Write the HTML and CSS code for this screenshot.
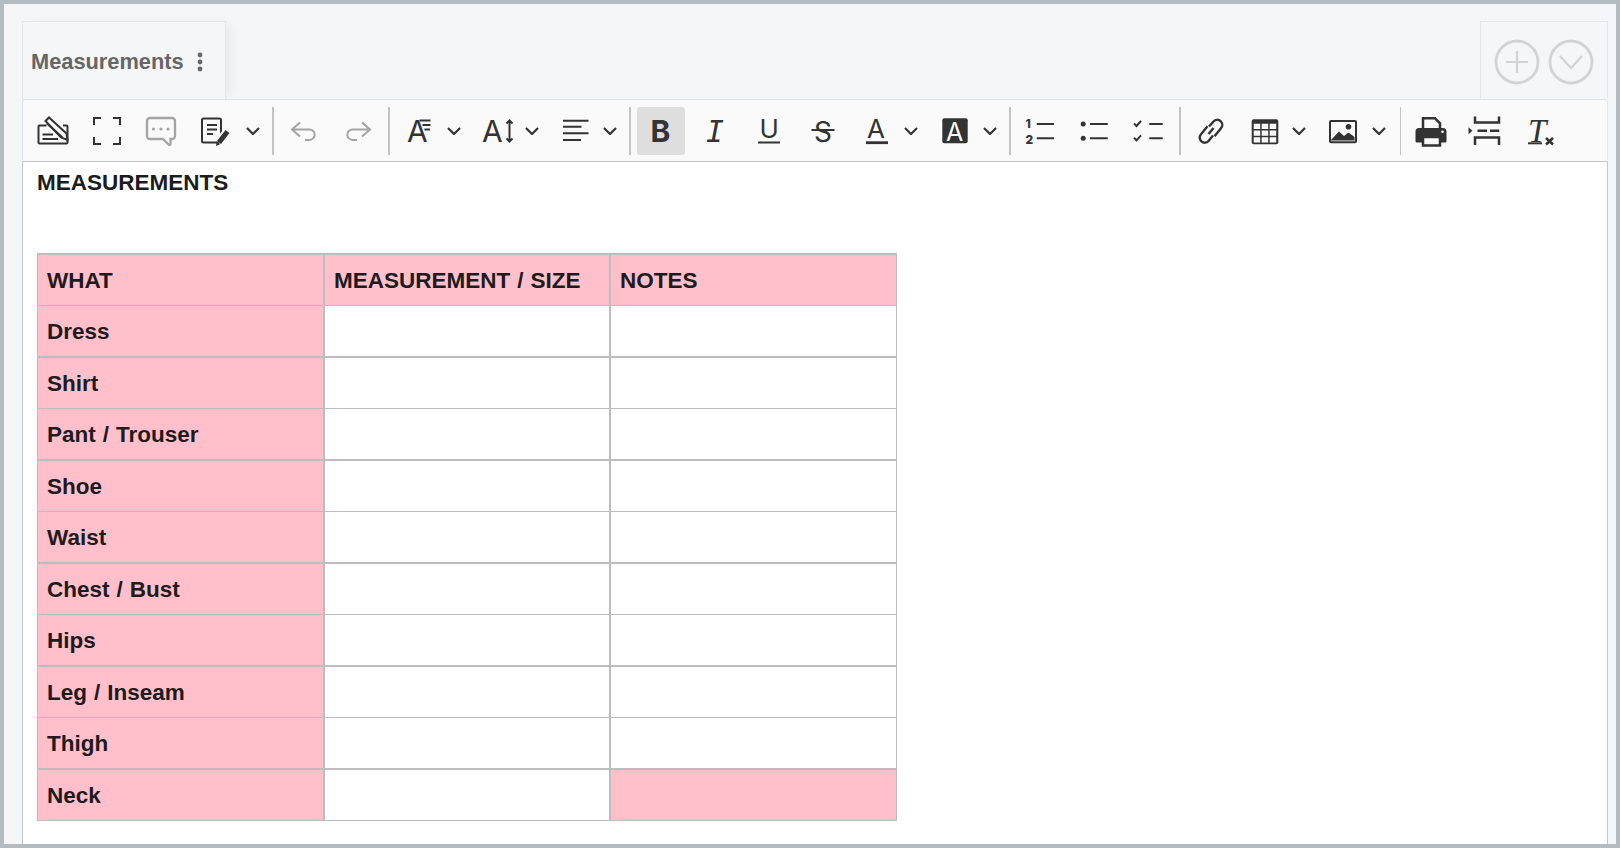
FILE: index.html
```html
<!DOCTYPE html>
<html lang="en">
<head>
<meta charset="utf-8">
<title>Measurements</title>
<link rel="stylesheet" href="styles.css">
</head>
<body>
<div class="frame">
  <div class="tabs">
    <div class="tab">
      <span class="tab-title">Measurements</span>
      <svg class="kebab" width="8" height="22" viewBox="0 0 8 22"><circle cx="4" cy="4" r="2.400"/><circle cx="4" cy="11" r="2.400"/><circle cx="4" cy="18" r="2.400"/></svg>
    </div>
    <div class="tab-actions">
      <svg class="round" width="46" height="46" viewBox="0 0 46 46"><circle cx="23" cy="23" r="21"/><path d="M12 23h22M23 12v22"/></svg>
      <svg class="round" width="46" height="46" viewBox="0 0 46 46"><circle cx="23" cy="23" r="21"/><path d="M12 17l11 12 11-12"/></svg>
    </div>
  </div>
  <div class="editor">
    <div class="toolbar">
      <button class="btn"><svg class="ic" viewBox="0 0 32 32"><path d="M9.500 10.500H2.500a1 1 0 0 0-1 1v16a1 1 0 0 0 1 1h27a1 1 0 0 0 1-1v-16a1 1 0 0 0-1-1H26"/><path d="M5.500 19.500H16M5.500 24H21"/><path class="bgfill" d="M8.500 6l3.500-3.500 17.500 16 1 6.500-6.500-2.500z"/><path d="M10 8.500l15.500 14"/></svg></button>
      <button class="btn"><svg class="ic" viewBox="0 0 32 32"><path d="M10 3H3v7M22 3h7v7M3 22v7h7M29 22v7h-7"/></svg></button>
      <button class="btn off"><svg class="ic heavy" viewBox="0 0 32 32"><path d="M5 3h22a3 3 0 0 1 3 3v15a3 3 0 0 1-3 3h-1.500v5a1 1 0 0 1-1.700.700L18 24H5a3 3 0 0 1-3-3V6a3 3 0 0 1 3-3z"/><circle class="dot" cx="8.500" cy="14" r="1.600"/><circle class="dot" cx="16" cy="14" r="1.600"/><circle class="dot" cx="23" cy="14" r="1.600"/></svg></button>
      <div class="drop wide">
        <button class="btn"><svg class="ic" viewBox="0 0 32 32"><rect x="3" y="3.500" width="19" height="24" rx="1.500"/><path d="M8 10h10M8 14.500h10M8 19h6"/><path class="halo" d="M28.500 16.500l-8.500 11"/><path class="thick" d="M28.500 16.500l-8.500 11"/><path class="dot" d="M17 31l.5-4.500 3.500 2.700z"/></svg></button>
        <svg class="chev" width="14" height="8" viewBox="0 0 14 8"><path d="M1 1l6 6 6-6"/></svg>
      </div>
      <span class="sep s1"></span>

      <button class="btn off"><svg class="ic" viewBox="0 0 32 32"><path d="M12 7.500l-8 7 8 7M4 14.500h17.500a5.200 5.200 0 0 1 0 10.400H17"/></svg></button>
      <button class="btn off"><svg class="ic" viewBox="0 0 32 32"><path d="M20 7.500l8 7-8 7M28 14.500H10.500a5.200 5.200 0 0 0 0 10.400H15"/></svg></button>
      <span class="sep"></span>

      <div class="drop">
        <button class="btn"><svg class="ic" viewBox="0 0 32 32"><text class="t-a" x="3" y="27">A</text><path d="M15.500 5.500h11M18.500 10H26.500M20.500 14.500h5.500"/></svg></button>
        <svg class="chev" width="14" height="8" viewBox="0 0 14 8"><path d="M1 1l6 6 6-6"/></svg>
      </div>
      <div class="drop">
        <button class="btn"><svg class="ic" viewBox="0 0 32 32"><text class="t-a" x="0" y="27">A</text><path d="M27.500 6v20M24.500 8.500l3-3 3 3M24.500 23.500l3 3 3-3"/></svg></button>
        <svg class="chev" width="14" height="8" viewBox="0 0 14 8"><path d="M1 1l6 6 6-6"/></svg>
      </div>
      <div class="drop">
        <button class="btn"><svg class="ic" viewBox="0 0 32 32"><path d="M3 5.700h25.500M3 11.700h18.500M3 18.300h25.500M3 25h18"/></svg></button>
        <svg class="chev" width="14" height="8" viewBox="0 0 14 8"><path d="M1 1l6 6 6-6"/></svg>
      </div>
      <span class="sep s2"></span>

      <button class="btn on"><svg class="ic" viewBox="0 0 32 32"><text class="t-b" x="5.500" y="27">B</text></svg></button>
      <button class="btn"><svg class="ic" viewBox="0 0 32 32"><text class="t-i" x="7" y="27">I</text></svg></button>
      <button class="btn"><svg class="ic" viewBox="0 0 32 32"><text class="t-u" x="6.500" y="23">U</text><path d="M5 27.500h22"/></svg></button>
      <button class="btn"><svg class="ic" viewBox="0 0 32 32"><text class="t-s" x="7" y="26.500">S</text><path d="M4.500 15h23"/></svg></button>
      <div class="drop">
        <button class="btn"><svg class="ic" viewBox="0 0 32 32"><text class="t-au" x="6" y="23">A</text><path class="und" d="M5 27.700h22"/></svg></button>
        <svg class="chev" width="14" height="8" viewBox="0 0 14 8"><path d="M1 1l6 6 6-6"/></svg>
      </div>
      <div class="drop c7">
        <button class="btn"><svg class="ic" viewBox="0 0 32 32"><rect class="solid" x="3.300" y="3.300" width="25.400" height="25" rx="2"/><text class="t-inv" x="7" y="25.700">A</text></svg></button>
        <svg class="chev" width="14" height="8" viewBox="0 0 14 8"><path d="M1 1l6 6 6-6"/></svg>
      </div>
      <span class="sep s3"></span>

      <button class="btn"><svg class="ic" viewBox="0 0 32 32"><text class="t-n" x="1.500" y="12.500">1</text><text class="t-n" x="1.500" y="29">2</text><path d="M12.700 9H30M12.700 23.300H30"/></svg></button>
      <button class="btn"><svg class="ic" viewBox="0 0 32 32"><circle class="dot" cx="5.200" cy="9" r="2.500"/><circle class="dot" cx="5.200" cy="23.300" r="2.500"/><path d="M12 9h17.700M12 23.300h17.700"/></svg></button>
      <button class="btn"><svg class="ic" viewBox="0 0 32 32"><path d="M2 8.500l2.500 2.500L9 6M2 22.800l2.500 2.500L9 20.300M17.300 9h13.400M17.300 23.300h13.400"/></svg></button>
      <span class="sep s4"></span>

      <button class="btn"><svg class="ic link" viewBox="0 0 32 32"><path d="M14 11.500l4.500-5a5 5 0 0 1 7.500 6.700l-6.500 8"/><path d="M18 20.500l-4.500 5.500a5 5 0 0 1-7.500-6.700l6.500-8"/><path d="M13.500 19l5-6"/></svg></button>
      <div class="drop tight">
        <button class="btn"><svg class="ic" viewBox="0 0 32 32"><rect class="solid" x="2.700" y="4.300" width="26.600" height="25" rx="2"/><path class="cells" d="M4.700 8.800h6.500v5.200H4.700zM12.700 8.800h6.500v5.200h-6.500zM20.700 8.800h6.500v5.200h-6.500zM4.700 15.500h6.500v5.200H4.700zM12.700 15.500h6.500v5.200h-6.500zM20.700 15.500h6.500v5.200h-6.500zM4.700 22.200h6.500v5.200H4.700zM12.700 22.200h6.500v5.200h-6.500zM20.700 22.200h6.500v5.200h-6.500z"/></svg></button>
        <svg class="chev" width="14" height="8" viewBox="0 0 14 8"><path d="M1 1l6 6 6-6"/></svg>
      </div>
      <div class="drop pic">
        <button class="btn"><svg class="ic" viewBox="0 0 32 32"><rect x="3" y="6" width="26" height="21.300" rx="1"/><circle class="dot" cx="21.500" cy="11.700" r="2.800"/><path class="dot" d="M3.500 25.500l8.500-9 5 4.500 4.500-3.500 6 4.500v3.500z"/></svg></button>
        <svg class="chev" width="14" height="8" viewBox="0 0 14 8"><path d="M1 1l6 6 6-6"/></svg>
      </div>
      <span class="sep s5"></span>

      <button class="btn"><svg class="ic" viewBox="0 0 32 32"><path d="M8 14V3.300h12l5 5V14" class="w25"/><path class="dot" d="M4 13h24a3.500 3.500 0 0 1 3.500 3.500V26a1.500 1.500 0 0 1-1.500 1.500H2A1.500 1.500 0 0 1 .5 26v-9.500A3.500 3.500 0 0 1 4 13z"/><path class="paper" d="M8 22h17v8.500H8z"/><circle class="holew" cx="27.500" cy="16.800" r="1.300"/></svg></button>
      <button class="btn"><svg class="ic" viewBox="0 0 32 32"><path class="w25" d="M6 1.500v6h24V1.500M6 30v-7.500h24V30M8.500 15.700h9.500M21 15.700h9.300"/><path class="dot" d="M-.5 12.300l4 3.400-4 3.600z"/></svg></button>
      <button class="btn"><svg class="ic" viewBox="0 0 32 32"><text class="t-t" x="5" y="27">T</text><path d="M5 28.300h14"/><path class="w25" d="M23 23l7 6.500M30 23l-7 6.500"/></svg></button>
    </div>
    <div class="content">
      <p class="title">MEASUREMENTS</p>
      <table class="sheet">
        <tr><td class="pink">WHAT</td><td class="pink">MEASUREMENT / SIZE</td><td class="pink">NOTES</td></tr>
        <tr class="thick"><td class="pink">Dress</td><td></td><td></td></tr>
        <tr><td class="pink">Shirt</td><td></td><td></td></tr>
        <tr class="thick"><td class="pink">Pant / Trouser</td><td></td><td></td></tr>
        <tr><td class="pink">Shoe</td><td></td><td></td></tr>
        <tr class="thick"><td class="pink">Waist</td><td></td><td></td></tr>
        <tr><td class="pink">Chest / Bust</td><td></td><td></td></tr>
        <tr class="thick"><td class="pink">Hips</td><td></td><td></td></tr>
        <tr><td class="pink">Leg / Inseam</td><td></td><td></td></tr>
        <tr class="thick"><td class="pink">Thigh</td><td></td><td></td></tr>
        <tr><td class="pink">Neck</td><td></td><td class="pink"></td></tr>
      </table>
    </div>
  </div>
</div>
</body>
</html>
```

FILE: styles.css
```css
* { box-sizing: border-box; }
html, body { margin: 0; padding: 0; }
body { font-family: "Liberation Sans", Arial, sans-serif; background: #f5f6f8; }

.frame {
  width: 1620px;
  height: 848px;
  border: 4px solid #b4bcc2;
  background: #f5f6f8;
  padding: 17px 8px 0 18px;
  display: flex;
  flex-direction: column;
  overflow: hidden;
}

.tabs { display: flex; justify-content: space-between; height: 78px; flex: none; }
.tab {
  width: 204px;
  display: flex;
  align-items: center;
  padding-left: 8px;
  border: 1px solid #e4e6ea;
  border-bottom: 0;
  box-shadow: 7px 0 10px -3px rgba(0, 0, 0, .06);
}
.tab-title { font-size: 21.8px; font-weight: 700; color: #666; margin-top: 2px; }
.kebab { margin-left: 12px; fill: #666; margin-top: 2px; }
.tab-actions {
  width: 128px;
  display: flex;
  align-items: center;
  gap: 8px;
  padding-left: 13px;
  padding-top: 2px;
  border: 1px solid #e4e6ea;
  border-bottom: 0;
}
.round { fill: none; stroke: #d2d3d5; stroke-width: 2.8; }
.round path { stroke-width: 2.2; }

.editor { flex: 1; display: flex; flex-direction: column; min-height: 0; }
.toolbar {
  height: 63px;
  flex: none;
  display: flex;
  align-items: flex-start;
  padding: 7px 0 0 6px;
  background: #fafafa;
  border: 1px solid #e0e3ec;
  border-bottom: 1px solid #c6c6c6;
  border-right-color: #e6e8ee;
  border-radius: 3px 3px 0 0;
}
.btn {
  width: 48px;
  height: 48px;
  flex: none;
  padding: 0;
  margin: 0 6px 0 0;
  border: 0;
  border-radius: 3px;
  background: transparent;
  display: flex;
  align-items: center;
  justify-content: center;
}
.btn.on { background: #dedede; }
.drop { width: 72px; height: 48px; flex: none; display: flex; align-items: center; margin-right: 6px; }
.drop .btn { margin-right: 3px; }
.drop.wide { width: 76px; }
.drop.wide .btn { margin-right: 7px; }
.drop.c7 .btn { margin-right: 4px; }
.drop.tight .btn { margin-right: 3px; }
.drop.pic { width: 74px; }
.drop.pic .btn { margin-right: 5px; }
.chev { flex: none; fill: none; stroke: #333; stroke-width: 2.2; }

.sep { width: 2px; height: 48px; flex: none; background: #c4c4c4; margin-right: 6px; }
.s1 { margin-left: -1px; }
.s2 { margin-left: -1px; margin-right: 6px; }
.s3 { margin-right: 5px; }
.s4 { margin-left: 1px; margin-right: 6px; }
.s5 { width: 1px; margin-left: 1px; margin-right: 6px; }

.ic { width: 32px; height: 32px; fill: none; stroke: #333; stroke-width: 2; overflow: visible; }
.ic.heavy { stroke-width: 2.3; }
.ic.link { stroke-width: 2.4; }
.ic text { stroke: none; fill: #333; }
.off .ic { stroke: #a4a4a4; }
.ic .dot { fill: #333; stroke: none; }
.off .ic .dot { fill: #a4a4a4; }
.ic .bgfill { fill: #fafafa; }
.ic .halo { stroke: #fafafa; stroke-width: 9; }
.ic .thick { stroke: #333; stroke-width: 5; }
.ic .und { stroke-width: 2.8; }
.ic .w25 { stroke-width: 2.5; }
.ic .solid { fill: #333; stroke: none; }
.ic .cells { fill: #fafafa; stroke: none; }
.ic .paper { fill: #fafafa; stroke: #333; stroke-width: 2.5; }
.ic .holew { fill: #fafafa; stroke: none; }

.t-a { font: 400 30px Inter, sans-serif; }
.t-b { font: 700 30px Inter, sans-serif; }
.t-i { font: italic 400 30px "DejaVu Sans Mono", monospace; }
.t-u { font: 400 26px Inter, sans-serif; }
.t-s { font: 400 28px Inter, sans-serif; }
.t-au { font: 400 26px Inter, sans-serif; }
.ic .t-inv { font: 400 25px Inter, sans-serif; fill: #fafafa; }
.t-n { font: 800 12px Inter, sans-serif; }
.t-t { font: italic 400 33px "Liberation Serif", serif; }

.content {
  flex: 1;
  min-height: 0;
  overflow: hidden;
  background: #fff;
  border-left: 1px solid #c6c6c6;
  border-right: 1px solid #c6c6c6;
  padding: 0 14px;
  color: #1c1c1c;
}
.title { margin: 0 0 51px; height: 40px; padding-top: 2px; line-height: 38px; font-size: 22.5px; font-weight: 700; }

.sheet {
  table-layout: fixed;
  width: 860px;
  border-collapse: separate;
  border-spacing: 0;
  border-top: 2px solid #bdbdbd;
  border-left: 1px solid #bdbdbd;
  font-size: 22.5px;
  font-weight: 700;
  word-spacing: .7px;
  color: #211a1c;
}
.sheet td {
  box-sizing: content-box;
  height: 49px;
  padding: 1px 0 0 9px;
  border-right: 2px solid #bdbdbd;
  border-bottom: 1px solid #bdbdbd;
  background: #fff;
  white-space: nowrap;
}
.sheet td:nth-child(1) { width: 276px; }
.sheet td:nth-child(2) { width: 275px; }
.sheet td:nth-child(3) { width: 276px; border-right-width: 1px; }
.sheet .thick td { border-bottom-width: 2px; }
.sheet td.pink { background: #ffc0cb; }
```
